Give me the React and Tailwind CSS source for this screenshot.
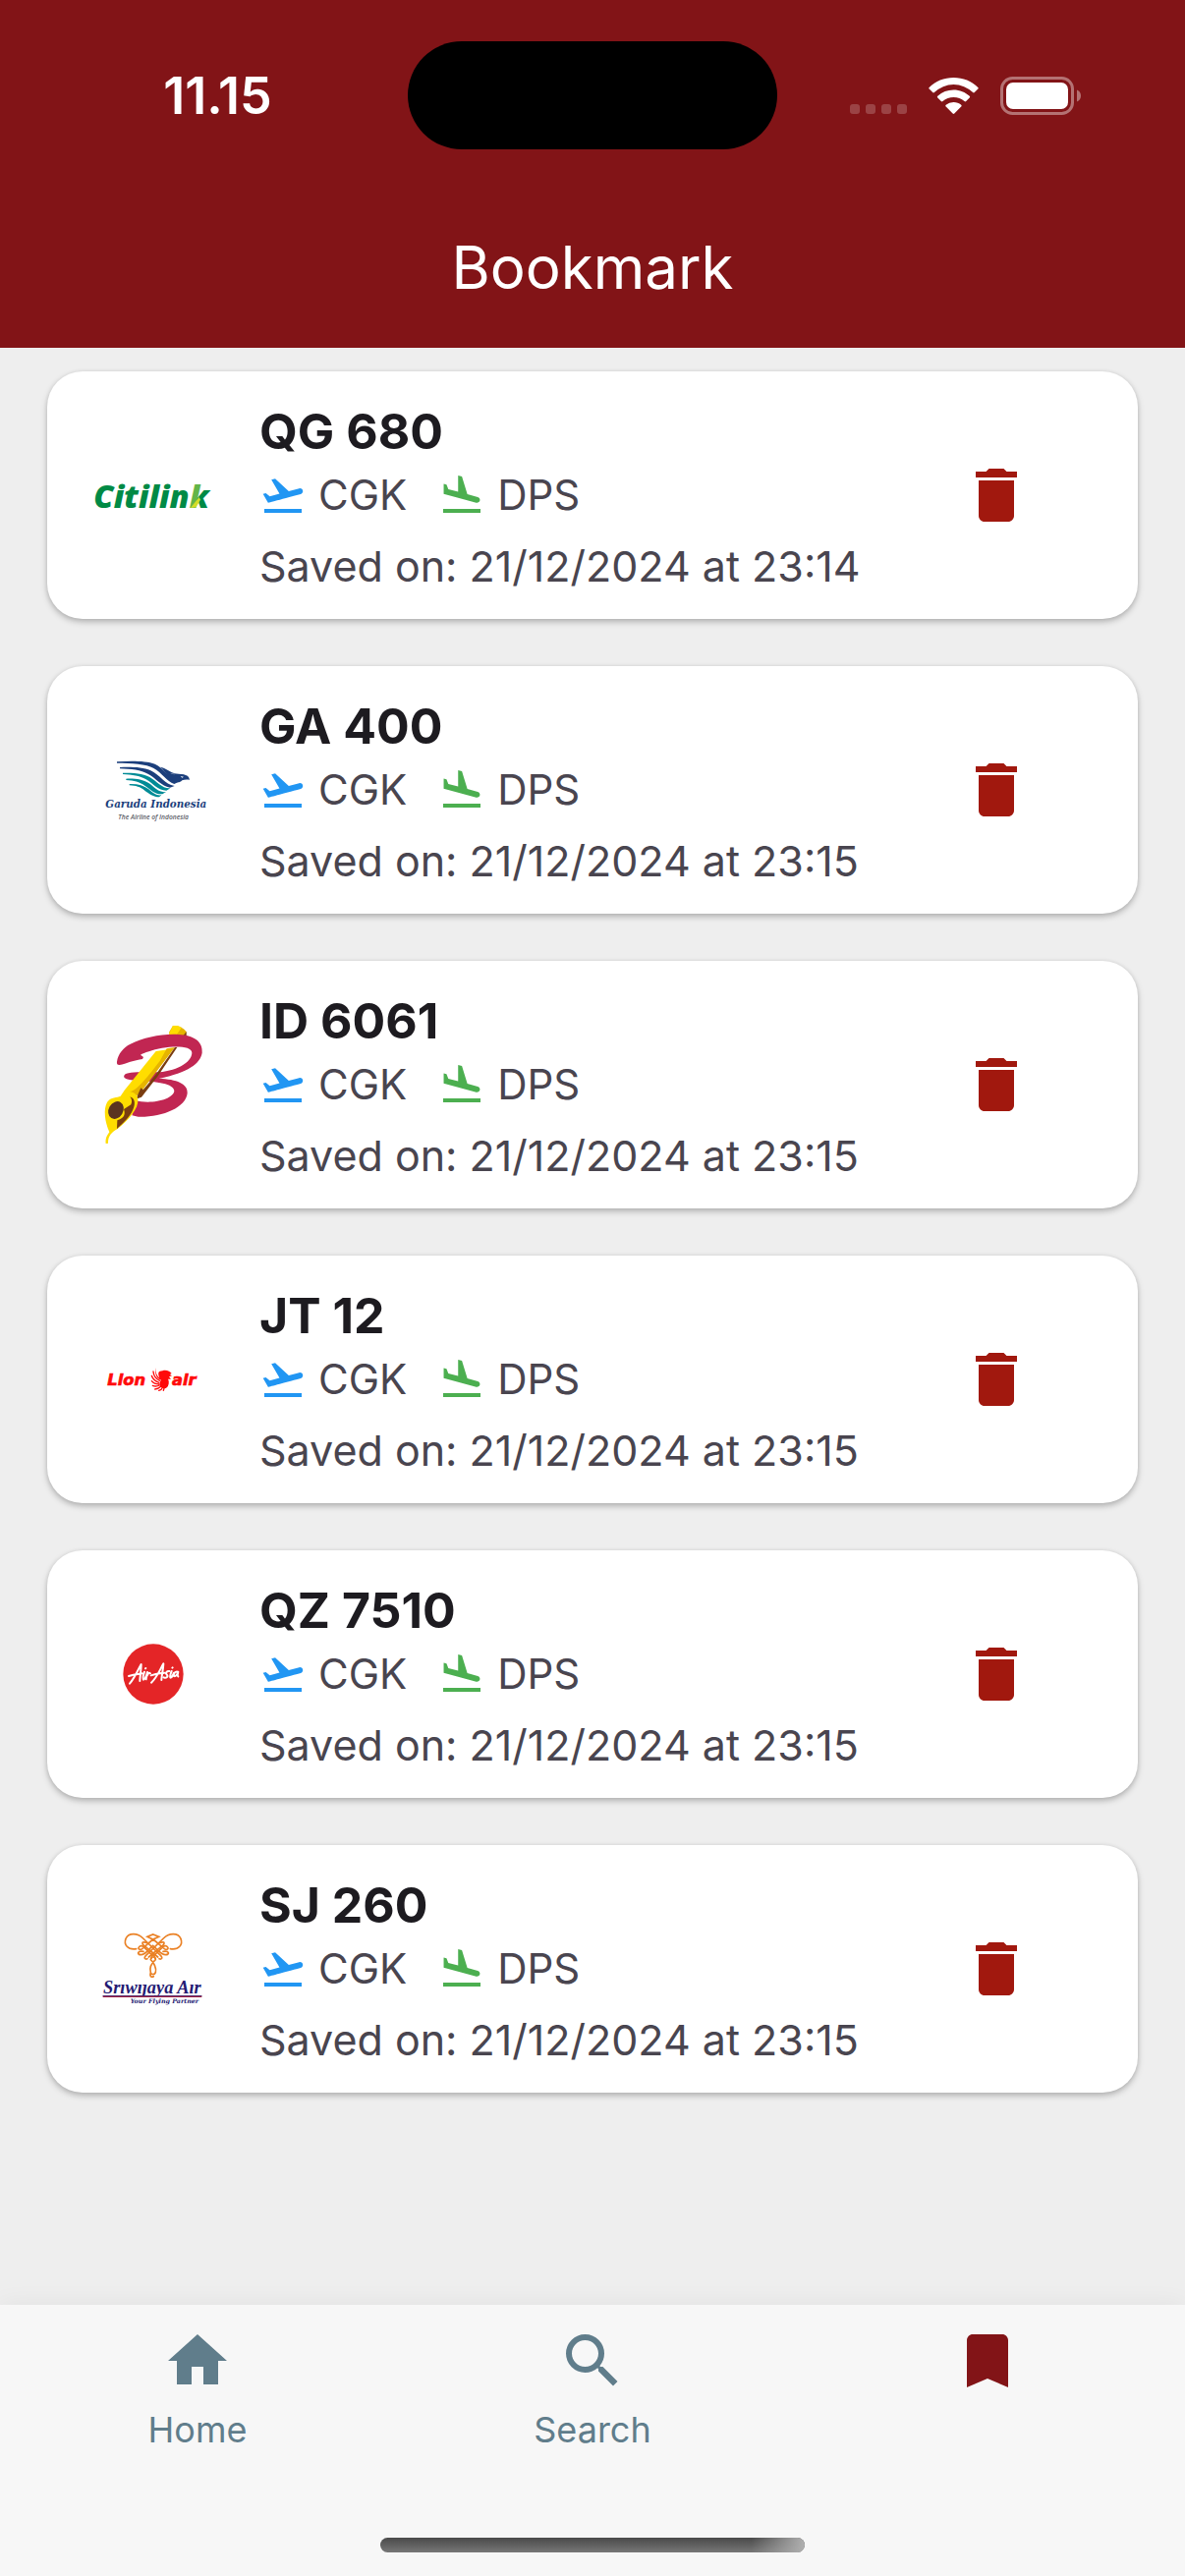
import { MdBookmark, MdDelete, MdFlightLand, MdFlightTakeoff, MdHome, MdSearch } from "react-icons/md";

function CitilinkLogo() {
  return (
    <svg viewBox="48 -48 360 360" className="size-[120px] overflow-visible" role="img" aria-label="Citilink">
      <defs>
        <linearGradient id="citilink-k" gradientUnits="userSpaceOnUse" x1="345" y1="120" x2="405" y2="150">
          <stop offset="0.38" stopColor="#63b548" />
          <stop offset="0.42" stopColor="#008a45" />
        </linearGradient>
      </defs>
      <text x="46" y="170" fontFamily="Open Sans, sans-serif" fontWeight="800" fontStyle="italic" fontSize="97" fill="#008a45">
        Citilin<tspan fill="url(#citilink-k)">k</tspan>
      </text>
      <path d="M342 170 368 138 372 146 358 170Z" fill="#d3dd26" />
    </svg>
  );
}

function GarudaLogo() {
  return (
    <svg viewBox="18 -18 360 360" className="size-[120px]" role="img" aria-label="Garuda Indonesia">
      <g fill="#1c3f7c">
        <path d="M87 76C130 73 175 73 203 83 230 94 245 128 276 137L262 144C238 136 226 110 198 95 178 83 130 80 87 80Z" />
        <path d="M96 93C130 92 165 92 190 103 220 117 232 145 263 150L249 155C222 150 208 128 183 114 160 101 130 98 96 97Z" />
        <path d="M219 92C236 95 250 109 264 111L250 111C268 119 278 113 294 116 304 118 307 122 309 131 300 130 292 130 286 133 277 143 265 139 256 132 240 121 235 104 219 92Z" />
        <path d="M249 110C255 112 280 112 296 117L280 124Z" />
      </g>
      <path d="M281 120 291 122 286 125Z" fill="#fff" />
      <g fill="#008b96">
        <path d="M105 110C140 110 165 111 187 123 210 136 225 159 250 157L238 164C212 164 200 144 176 130 156 118 135 116 105 114Z" />
        <path d="M115 128C145 127 165 130 185 142 205 156 214 171 237 168L226 175C203 176 191 162 172 149 155 137 140 133 115 132Z" />
        <path d="M125 144C150 143 168 148 184 160 200 174 208 180 223 178L216 184C199 184 185 173 172 164 158 153 145 149 125 148Z" />
      </g>
      <text x="52" y="215" fontFamily="DejaVu Serif, serif" fontWeight="700" fontStyle="italic" fontSize="31" fill="#1c3f7c">Garuda Indonesia</text>
      <text x="91" y="252" fontFamily="Open Sans, sans-serif" fontWeight="600" fontStyle="italic" fontSize="20" fill="#5c6068">The Airline of Indonesia</text>
    </svg>
  );
}

function BatikLogo() {
  return (
    <svg viewBox="18 42 360 360" className="size-[120px]" role="img" aria-label="Batik Air">
      <path d="M258 42C270 40 285 45 299 60L297 74 288 84 256 80 246 62Z" fill="#e6b400" />
      <path d="M258 42C268 40 276 42 284 48L262 80 240 80Z" fill="#ffdd00" />
      <path d="M299 60 299 70 287 90 276 90Z" fill="#7a3d10" />
      <path d="M87 152C90 128 108 107 128 98 170 78 225 66 275 69 325 71 350 93 347 125 341 158 305 184 215 204 270 205 304 220 302 248 298 292 225 322 152 320L133 316 142 270C190 284 260 268 262 241 260 218 210 213 148 209 120 208 105 203 109 194 115 182 160 184 205 184 265 183 315 155 316 125 315 105 270 104 225 110 195 116 170 124 159 131L168 138 165 144C140 147 115 158 95 162 88 162 86 158 87 152Z" fill="#c12652" />
      <path d="M206 120 252 113 136 258 107 243Z" fill="#ffdd00" />
      <path d="M239 112 264 108 160 245 138 264 118 246C148 246 190 185 218 150Z" fill="#e6b400" />
      <path d="M264 108 271 108 211 197 162 260 145 266 160 232 167 238 205 193Z" fill="#7a3d10" />
      <path d="M107 244C127 240 149 245 151 267 154 295 122 331 88 358 73 366 59 378 60 401L53 402C51 387 57 376 64 367 50 335 45 297 57 276 68 258 88 263 98 257Z" fill="#ffdd00" />
      <path d="M127 259C145 264 144 286 132 307 118 330 101 344 87 357L88 331C113 323 112 309 108 297L130 283C134 274 133 267 127 259Z" fill="#7a3d10" />
      <ellipse cx="84" cy="300" rx="22" ry="28" transform="rotate(30 84 300)" fill="#5a3320" />
    </svg>
  );
}

function LionLogo() {
  return (
    <svg viewBox="18 -78 360 360" className="size-[120px]" role="img" aria-label="Lion air">
      <g fill="#ff0a0a" fontFamily="DejaVu Sans, sans-serif" fontWeight="700" fontStyle="italic" fontSize="49">
        <text x="58" y="121" stroke="#ff0a0a" strokeWidth="2">Lion</text>
        <text x="255" y="121" stroke="#ff0a0a" strokeWidth="2">air</text>
        <path d="M205 66C204 79 208 90 217 98 211 82 213 77 226 76 237 72 249 77 254 84L248 87 255 91 246 94 252 101 243 101C249 113 243 126 231 127 218 127 215 111 222 104 209 101 202 87 205 66Z" />
        <circle cx="231" cy="117" r="13" />
      </g>
      <g fill="none" stroke="#ff0a0a" strokeWidth="4" strokeLinecap="round">
        <path d="M198 78C199 92 207 101 218 106M193 91C197 103 206 109 216 112M193 107C199 115 207 117 216 117M196 121C203 124 211 123 217 120M203 132C211 132 217 128 221 124M215 136C221 134 225 131 226 127M229 136 231 129" />
      </g>
    </svg>
  );
}

function AirAsiaLogo() {
  return (
    <svg viewBox="-42 -48 360 360" className="size-[120px]" role="img" aria-label="AirAsia">
      <circle cx="138" cy="132" r="92" fill="#e42527" />
      <g fill="none" stroke="#fff" strokeWidth="6" strokeLinecap="round" strokeLinejoin="round">
        <path d="M66 161C81 144 91 120 101 102 101 122 97 140 97 153M63 138C80 133 92 132 104 130M111 125C108 134 104 146 108 149 113 146 117 140 120 126 119 134 117 141 116 148M119 137C122 129 126 127 129 130M114 115 115 114" />
        <path d="M132 158C149 143 158 119 169 100 168 121 163 139 163 150M131 136C148 130 158 130 172 128M187 123C179 122 174 129 179 133 185 139 178 146 170 142M194 123C190 132 188 143 191 143 196 141 199 134 201 128M214 125C204 122 199 131 201 138 206 141 212 132 214 125 212 133 211 137 214 139M196 113 197 112" />
      </g>
    </svg>
  );
}

function SriwijayaLogo() {
  return (
    <svg viewBox="18 -18 360 360" className="size-[120px]" role="img" aria-label="Sriwijaya Air">
      <g fill="none" stroke="#ea8125" strokeWidth="5" strokeLinecap="round">
        <path d="M146 101C120 105 107 88 114 70 123 50 151 53 167 69L221 122C228 130 222 134 216 131M250 101C276 105 289 88 282 70 273 50 245 53 229 69L175 122C168 130 174 134 180 131" />
        <path d="M180 64 197 57 215 64 197 72ZM197 72 164 101C157 106 150 101 154 96 159 89 166 92 171 97L205 130M198 72 232 101C239 106 246 101 242 96 237 89 230 92 225 97L191 130" />
        <path d="M178 82C159 77 164 87 171 92L212 126M218 82C237 77 232 87 225 92L184 126M168 109C148 106 148 119 160 119 176 119 182 103 197 91 212 103 220 119 236 119 248 119 248 106 228 109" />
        <path d="M197 113 190 134C199 142 209 160 205 173 202 181 192 181 190 173 186 160 190 147 205 134L197 113M190 173C186 187 194 188 199 185" />
      </g>
      <text x="45" y="236" fontFamily="Liberation Serif, serif" fontWeight="700" fontStyle="italic" fontSize="55" fill="#241a73">Srıwıȷaya Aır</text>
      <path d="M44 244H346V249H44Z" fill="#a02245" />
      <path d="M44 243H346V245H44Z" fill="#352371" />
      <text x="128" y="267" fontFamily="DejaVu Serif, serif" fontWeight="700" fontStyle="italic" fontSize="19" fill="#241a73">Your Flying Partner</text>
    </svg>
  );
}

const bookmarks = [
  { flight: "QG 680", time: "23:14", Logo: CitilinkLogo },
  { flight: "GA 400", time: "23:15", Logo: GarudaLogo },
  { flight: "ID 6061", time: "23:15", Logo: BatikLogo },
  { flight: "JT 12", time: "23:15", Logo: LionLogo },
  { flight: "QZ 7510", time: "23:15", Logo: AirAsiaLogo },
  { flight: "SJ 260", time: "23:15", Logo: SriwijayaLogo },
];

function StatusBar() {
  return (
    <div className="grid grid-cols-[1fr_376px_1fr] items-center pt-[42px]">
      <time className="justify-self-center pt-[2px] pl-7 text-[52px] leading-[60px] font-semibold">11.15</time>
      <div className="h-[110px] rounded-full bg-black" />
      <div className="flex items-center justify-end gap-[22px] pr-[106px]">
        <div className="flex gap-[6px] pt-7">
          <span className="size-[10px] rounded-[3px] bg-white/20" />
          <span className="size-[10px] rounded-[3px] bg-white/20" />
          <span className="size-[10px] rounded-[3px] bg-white/20" />
          <span className="size-[10px] rounded-[3px] bg-white/20" />
        </div>
        <svg viewBox="0 0 51 37" className="h-[37px] w-[51px]" fill="#fff" role="img" aria-label="Wi-Fi">
          <path d="M25.500 0C35 0 44 3.700 50.300 9.900a1.200 1.200 0 0 1 0 1.700l-3.500 3.500a1.200 1.200 0 0 1-1.700 0A28 28 0 0 0 5.900 15.100a1.200 1.200 0 0 1-1.700 0L.7 11.600a1.200 1.200 0 0 1 0-1.700C7 3.700 16 0 25.500 0Z" />
          <path d="M25.500 12.500c6.200 0 11.900 2.400 16.200 6.300a1.200 1.200 0 0 1 0 1.800l-3.500 3.500a1.200 1.200 0 0 1-1.700 0 16.500 16.500 0 0 0-22 0 1.200 1.200 0 0 1-1.700 0l-3.500-3.500a1.200 1.200 0 0 1 0-1.800 24 24 0 0 1 16.200-6.300Z" />
          <path d="M25.500 25c2.900 0 5.600 1 7.700 2.800a1.200 1.200 0 0 1 0 1.700l-6.900 7a1.200 1.200 0 0 1-1.700 0l-6.900-7a1.200 1.200 0 0 1 0-1.700 12 12 0 0 1 7.800-2.800Z" />
        </svg>
        <svg viewBox="0 0 82 39" className="h-[39px] w-[82px]" role="img" aria-label="Battery full">
          <rect x="1.500" y="1.500" width="72" height="36" rx="11" fill="none" stroke="#fff" strokeOpacity="0.4" strokeWidth="3" />
          <rect x="6" y="6" width="63" height="27" rx="7" fill="#fff" />
          <path d="M78 13.500c2.500 1 4 3.300 4 6s-1.500 5-4 6Z" fill="#fff" fillOpacity="0.4" />
        </svg>
      </div>
    </div>
  );
}

function BookmarkCard({ flight, time, Logo }) {
  return (
    <li className="flex items-center gap-12 rounded-[36px] bg-white py-6 pr-[72px] pl-12 shadow-[0_3px_6px_rgba(0,0,0,0.25),0_0_4px_rgba(0,0,0,0.06)]">
      <Logo />
      <div className="flex-1">
        <h2 className="pt-[2px] text-[50px] leading-[70px] font-bold text-[#1d1b20]">{flight}</h2>
        <div className="flex items-center gap-3 text-[42px] leading-[60px] text-[#49454f]">
          <MdFlightTakeoff className="size-12 text-[#2196f3]" />
          <span>CGK</span>
          <MdFlightLand className="ml-5 size-12 text-[#4caf50]" />
          <span>DPS</span>
        </div>
        <p className="mt-3 text-[43px] leading-[60px] text-[#49454f]">Saved on: 21/12/2024 at {time}</p>
      </div>
      <button type="button" aria-label={`Delete ${flight}`} className="grid size-[144px] place-items-center text-[#a1180e]">
        <MdDelete className="size-[72px]" />
      </button>
    </li>
  );
}

export default function App() {
  return (
    <div className="flex min-h-screen flex-col bg-[#eeeeee] font-[Inter,sans-serif]">
      <header className="bg-[#821417] pb-[42px] text-white">
        <StatusBar />
        <h1 className="pt-[80px] text-center text-[60px] leading-[80px]">Bookmark</h1>
      </header>
      <main className="flex-1 px-12 py-6">
        <ul className="flex flex-col gap-12">
          {bookmarks.map((item) => (
            <BookmarkCard key={item.flight} {...item} />
          ))}
        </ul>
      </main>
      <footer className="bg-[#f7f7f7] pt-[21px] pb-6 shadow-[0_0_24px_rgba(0,0,0,0.06)]">
        <nav className="grid h-[216px] grid-cols-3 items-start text-[36px] leading-[48px] text-[#607d8b]">
          <a href="#home" className="flex flex-col items-center gap-[10px]">
            <MdHome className="size-[72px]" />
            Home
          </a>
          <a href="#search" className="flex flex-col items-center gap-[10px]">
            <MdSearch className="size-[72px]" />
            Search
          </a>
          <a href="#bookmark" aria-label="Bookmark" aria-current="page" className="flex flex-col items-center text-[#821417]">
            <MdBookmark className="size-[72px]" />
          </a>
        </nav>
        <div className="mx-auto h-[15px] w-[432px] overflow-hidden rounded-full bg-linear-to-b from-[#4a4a4a] to-[#777777]">
          <div className="ml-auto h-full w-[54px] bg-linear-to-r from-transparent to-[#b0b0b0]" />
        </div>
      </footer>
    </div>
  );
}
